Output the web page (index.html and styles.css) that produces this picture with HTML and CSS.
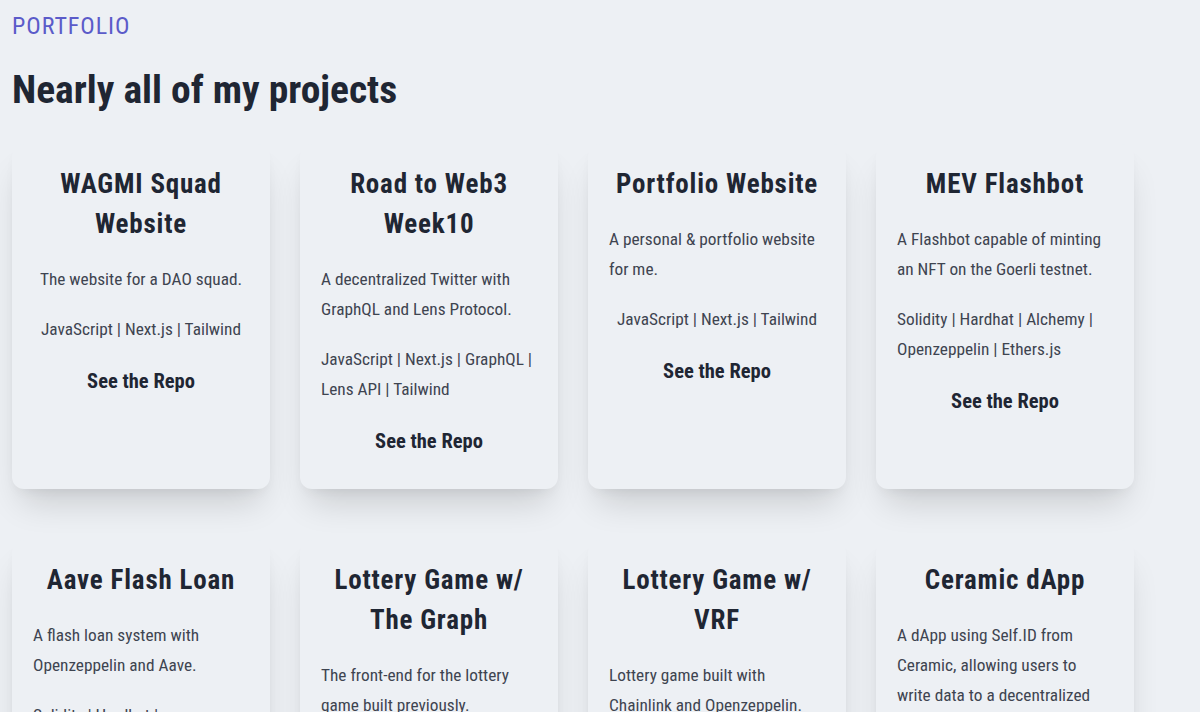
FILE: index.html
```html
<!DOCTYPE html>
<html lang="en">
	<head>
		<meta charset="utf-8">
		<meta name="viewport" content="width=device-width, initial-scale=1">
		<link rel="stylesheet" href="styles.css">
	</head>

	<body>
		<section class='projects'>
			<p class='eyebrow'>PORTFOLIO</p>
			<h1 class='heading'>Nearly all of my projects</h1>

			<div class='grid'>
				<div class='card'>
					<h2>WAGMI Squad Website</h2>
					<p>The website for a DAO squad.</p>
					<p>JavaScript | Next.js | Tailwind</p>
					<a href='#'>See the Repo</a>
				</div>
				<div class='card'>
					<h2>Road to Web3 Week10</h2>
					<p>A decentralized Twitter with GraphQL and Lens Protocol.</p>
					<p>JavaScript | Next.js | GraphQL | Lens API | Tailwind</p>
					<a href='#'>See the Repo</a>
				</div>
				<div class='card'>
					<h2>Portfolio Website</h2>
					<p>A personal &amp; portfolio website for me.</p>
					<p>JavaScript | Next.js | Tailwind</p>
					<a href='#'>See the Repo</a>
				</div>
				<div class='card'>
					<h2>MEV Flashbot</h2>
					<p>A Flashbot capable of minting an NFT on the Goerli testnet.</p>
					<p>Solidity | Hardhat | Alchemy | Openzeppelin | Ethers.js</p>
					<a href='#'>See the Repo</a>
				</div>

				<div class='card'>
					<h2>Aave Flash Loan</h2>
					<p>A flash loan system with Openzeppelin and Aave.</p>
					<p>Solidity | Hardhat | Openzeppelin | Aave</p>
					<a href='#'>See the Repo</a>
				</div>
				<div class='card'>
					<h2>Lottery Game w/ The Graph</h2>
					<p>The front-end for the lottery game built previously.</p>
					<p>JavaScript | Next.js | The Graph | Tailwind</p>
					<a href='#'>See the Repo</a>
				</div>
				<div class='card'>
					<h2>Lottery Game w/ VRF</h2>
					<p>Lottery game built with Chainlink and Openzeppelin.</p>
					<p>Solidity | Hardhat | Chainlink | Openzeppelin</p>
					<a href='#'>See the Repo</a>
				</div>
				<div class='card'>
					<h2>Ceramic dApp</h2>
					<p>A dApp using Self.ID from Ceramic, allowing users to write data to a decentralized network.</p>
					<p>JavaScript | Next.js | Ceramic</p>
					<a href='#'>See the Repo</a>
				</div>
			</div>
		</section>
	</body>
</html>
```

FILE: styles.css
```css
html {
	background-color: #edf0f4;
}

body {
	margin: 0;
	font-family: "Roboto Condensed", "Liberation Sans", Arial, sans-serif;
	color: #1f2633;
}

.projects {
	padding: 12px 12px 40px;
}

.eyebrow {
	margin: 0;
	font-size: 24px;
	line-height: 28px;
	letter-spacing: 0.04em;
	color: #5b5bc9;
}

.heading {
	margin: 24px 0 0;
	font-size: 39.5px;
	line-height: 52px;
	font-weight: bold;
	color: #1f2633;
}

.grid {
	display: grid;
	grid-template-columns: repeat(4, 258px);
	column-gap: 30px;
	row-gap: 51px;
	margin-top: 28px;
}

.card {
	display: flex;
	flex-direction: column;
	align-items: center;
	padding: 20px 21px 34px;
	background-color: #edf0f4;
	border-radius: 12px;
	box-shadow: 0 22px 34px -10px rgba(0, 0, 0, 0.16), 0 6px 14px -6px rgba(0, 0, 0, 0.07);
}

.card h2 {
	margin: 0 0 20px;
	font-size: 27px;
	line-height: 40px;
	letter-spacing: 0.03em;
	text-align: center;
	color: #1f2633;
}

.card p {
	margin: 0 0 20px;
	font-size: 17.3px;
	line-height: 30px;
	color: #3e4450;
}

.card a {
	margin-top: 3px;
	font-size: 20.5px;
	line-height: 28px;
	font-weight: bold;
	color: #1f2633;
	text-decoration: none;
}
```
